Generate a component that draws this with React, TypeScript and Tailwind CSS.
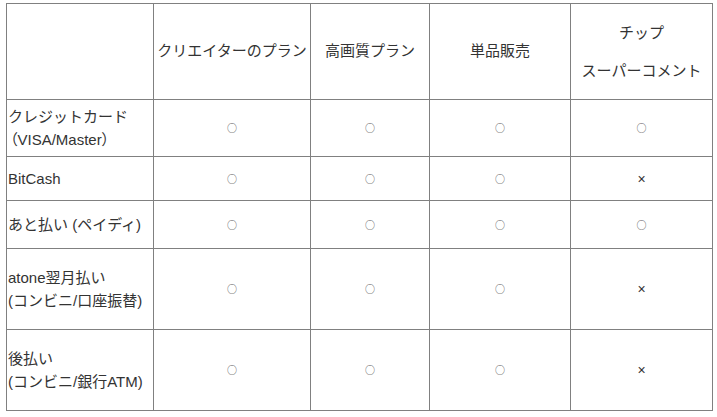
import React from "react";

const font = "font-['Liberation_Sans','Noto_Sans_CJK_JP',sans-serif]";

type Mark = "o" | "x";

const rows: { label: React.ReactNode; h: string; marks: Mark[] }[] = [
  {
    label: (
      <>
        <div>クレジットカード</div>
        <div className="[font-feature-settings:'palt'] pl-[2px]">（VISA/Master）</div>
      </>
    ),
    h: "h-[56px]",
    marks: ["o", "o", "o", "o"],
  },
  { label: <div>BitCash</div>, h: "h-[43px]", marks: ["o", "o", "o", "x"] },
  { label: <div>あと払い (ペイディ)</div>, h: "h-[47px]", marks: ["o", "o", "o", "o"] },
  {
    label: (
      <>
        <div>atone翌月払い</div>
        <div>(コンビニ/口座振替)</div>
      </>
    ),
    h: "h-[80px]",
    marks: ["o", "o", "o", "x"],
  },
  {
    label: (
      <>
        <div>後払い</div>
        <div>(コンビニ/銀行ATM)</div>
      </>
    ),
    h: "h-[80px]",
    marks: ["o", "o", "o", "x"],
  },
];

function MarkCell({ m }: { m: Mark }) {
  return (
    <div className="bg-white flex items-center justify-center">
      {m === "o" ? (
        <span className="font-['Noto_Sans_CJK_JP',sans-serif] text-[10px] leading-none text-[#555]">○</span>
      ) : (
        <span className="text-[14px] leading-none text-[#333]">×</span>
      )}
    </div>
  );
}

export default function App() {
  return (
    <div className={`min-h-screen bg-white pl-[6px] pt-[3px] text-[15px] text-[#333] ${font}`}>
      <div className="grid w-[707px] grid-cols-[146px_156px_118px_140px_141px] gap-px bg-[#808080] p-px">
        {/* header */}
        <div className="h-[95px] bg-white" />
        <div className="flex items-center justify-center bg-white">クリエイターのプラン</div>
        <div className="flex items-center justify-center bg-white">高画質プラン</div>
        <div className="flex items-center justify-center bg-white">単品販売</div>
        <div className="flex flex-col items-center justify-center gap-[15px] bg-white leading-[23px]">
          <div>チップ</div>
          <div>スーパーコメント</div>
        </div>

        {rows.map((r, i) => (
          <React.Fragment key={i}>
            <div className={`${r.h} flex flex-col justify-center bg-white pl-px leading-[23px]`}>
              {r.label}
            </div>
            {r.marks.map((m, j) => (
              <MarkCell key={j} m={m} />
            ))}
          </React.Fragment>
        ))}
      </div>
    </div>
  );
}
